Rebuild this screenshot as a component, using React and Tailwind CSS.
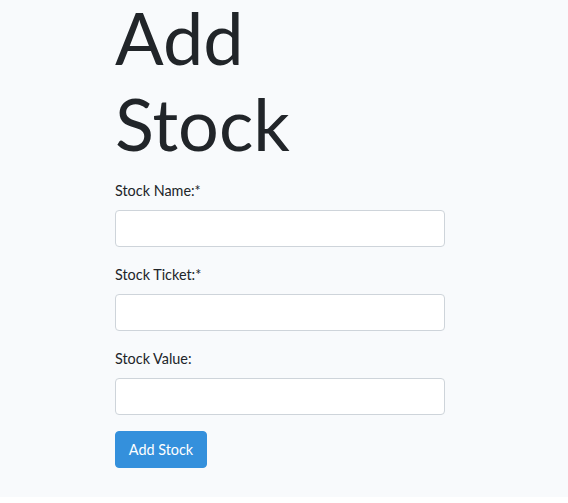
export default function App() {
  const fields = [
    { id: "name", label: "Stock Name:*" },
    { id: "ticket", label: "Stock Ticket:*" },
    { id: "value", label: "Stock Value:" },
  ];

  return (
    <div className="min-h-[503px] bg-[#f8fafc] text-[#212529] font-['Lato',sans-serif]">
      <div className="ml-[115px] w-[330px]">
        <h1 className="-mt-[6px] mb-[12px] max-w-[260px] text-[72px] leading-[86.4px] font-normal">
          Add Stock
        </h1>
        <form onSubmit={(e) => e.preventDefault()}>
          {fields.map((f) => (
            <div key={f.id} className="mb-4">
              <label
                htmlFor={f.id}
                className="block mb-2 text-[14.4px] leading-[23px]"
              >
                {f.label}
              </label>
              <input
                id={f.id}
                type="text"
                className="block w-full h-[37px] px-3 bg-white border border-[#ced4da] rounded-[4px] text-[14.4px] outline-none"
              />
            </div>
          ))}
          <button
            type="submit"
            className="w-[92px] h-[37px] bg-[#3490dc] border border-[#3490dc] rounded-[4px] text-white text-[14.4px]"
          >
            Add Stock
          </button>
        </form>
      </div>
    </div>
  );
}
